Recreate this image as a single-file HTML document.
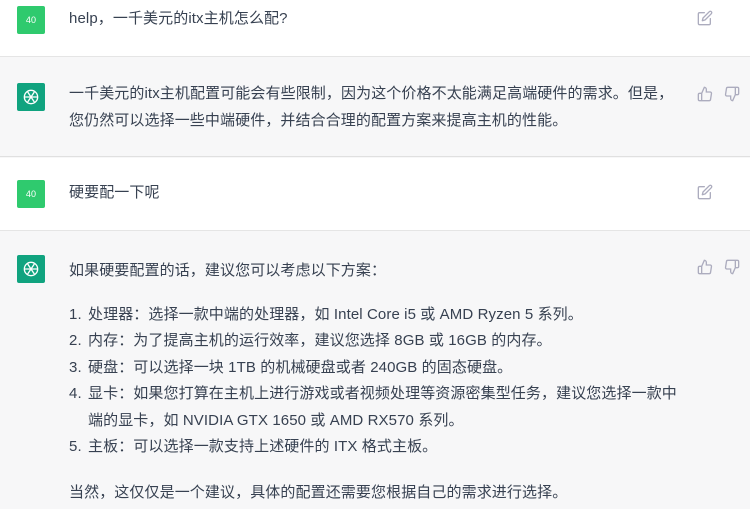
<!DOCTYPE html><html><head><meta charset="utf-8"><style>
*{margin:0;padding:0;box-sizing:border-box}
body{width:750px;height:509px;overflow:hidden;font-family:"Liberation Sans","Noto Sans CJK SC",sans-serif;color:#374151;font-size:15px;background:#f7f7f8;letter-spacing:0.1px}
.row{position:absolute;left:0;width:750px}
.w{background:#fff}.g{background:#f7f7f8}
.av{position:absolute;left:17px;width:28px;height:28px;border-radius:2px;color:#fff;font-size:9px;display:flex;align-items:center;justify-content:center}
.u{background:#2fca6e}.b{background:#10a37f}
.t{position:absolute;left:69px;line-height:27px;white-space:nowrap}
.li{position:relative;padding-left:19px;line-height:26.4px}
.li b{position:absolute;left:0;font-weight:normal}
.ic{position:absolute}
</style></head><body>
<div class="row w" style="top:0;height:57px;border-bottom:1px solid #e5e5e5">
<div class="av u" style="top:6px">40</div>
<div class="t" style="top:5px">help，一千美元的itx主机怎么配?</div>
<svg class="ic" style="left:697px;top:10px" width="16" height="16" viewBox="0 0 24 24" fill="none" stroke="#acacbe" stroke-width="2" stroke-linecap="round" stroke-linejoin="round"><path d="M11 4H4a2 2 0 0 0-2 2v14a2 2 0 0 0 2 2h14a2 2 0 0 0 2-2v-7"/><path d="M18.5 2.5a2.1 2.1 0 0 1 3 3L12 15l-4 1 1-4 9.5-9.5z"/></svg>
</div>
<div class="row g" style="top:58px;height:99px;border-bottom:1px solid #e0e0e0">
<div class="av b" style="top:25px"><svg width="20" height="20" viewBox="0 0 24 24" fill="none" stroke="#fff" stroke-width="1.6"><circle cx="12" cy="12" r="8"/><path d="M8 6l8 12M16 6L8 18M4 12h16"/></svg></div>
<div class="t" style="top:22px">一千美元的itx主机配置可能会有些限制，因为这个价格不太能满足高端硬件的需求。但是，<br>您仍然可以选择一些中端硬件，并结合合理的配置方案来提高主机的性能。</div>
<svg class="ic" style="left:697px;top:28px" width="16" height="16" viewBox="0 0 24 24" fill="none" stroke="#acacbe" stroke-width="2"><path d="M14 9V5a3 3 0 0 0-3-3l-4 9v11h11.3a2 2 0 0 0 2-1.7l1.4-9a2 2 0 0 0-2-2.3zM7 22H4a2 2 0 0 1-2-2v-7a2 2 0 0 1 2-2h3"/></svg>
<svg class="ic" style="left:724px;top:28px" width="16" height="16" viewBox="0 0 24 24" fill="none" stroke="#acacbe" stroke-width="2"><path d="M10 15v4a3 3 0 0 0 3 3l4-9V2H5.7a2 2 0 0 0-2 1.7l-1.4 9a2 2 0 0 0 2 2.3zM17 2h3a2 2 0 0 1 2 2v7a2 2 0 0 1-2 2h-3"/></svg>
</div>
<div class="row w" style="top:158px;height:73px;border-bottom:1px solid #e5e5e5">
<div class="av u" style="top:22px">40</div>
<div class="t" style="top:21px">硬要配一下呢</div>
<svg class="ic" style="left:697px;top:26px" width="16" height="16" viewBox="0 0 24 24" fill="none" stroke="#acacbe" stroke-width="2" stroke-linecap="round" stroke-linejoin="round"><path d="M11 4H4a2 2 0 0 0-2 2v14a2 2 0 0 0 2 2h14a2 2 0 0 0 2-2v-7"/><path d="M18.5 2.5a2.1 2.1 0 0 1 3 3L12 15l-4 1 1-4 9.5-9.5z"/></svg>
</div>
<div class="row g" style="top:232px;height:277px">
<div class="av b" style="top:23px"><svg width="20" height="20" viewBox="0 0 24 24" fill="none" stroke="#fff" stroke-width="1.6"><circle cx="12" cy="12" r="8"/><path d="M8 6l8 12M16 6L8 18M4 12h16"/></svg></div>
<div class="t" style="top:25px">如果硬要配置的话，建议您可以考虑以下方案：</div>
<div class="t" style="top:70px">
<div class="li"><b>1.</b>处理器：选择一款中端的处理器，如 Intel Core i5 或 AMD Ryzen 5 系列。</div>
<div class="li"><b>2.</b>内存：为了提高主机的运行效率，建议您选择 8GB 或 16GB 的内存。</div>
<div class="li"><b>3.</b>硬盘：可以选择一块 1TB 的机械硬盘或者 240GB 的固态硬盘。</div>
<div class="li"><b>4.</b>显卡：如果您打算在主机上进行游戏或者视频处理等资源密集型任务，建议您选择一款中<br>端的显卡，如 NVIDIA GTX 1650 或 AMD RX570 系列。</div>
<div class="li"><b>5.</b>主板：可以选择一款支持上述硬件的 ITX 格式主板。</div>
</div>
<div class="t" style="top:247px">当然，这仅仅是一个建议，具体的配置还需要您根据自己的需求进行选择。</div>
<svg class="ic" style="left:697px;top:27px" width="16" height="16" viewBox="0 0 24 24" fill="none" stroke="#acacbe" stroke-width="2"><path d="M14 9V5a3 3 0 0 0-3-3l-4 9v11h11.3a2 2 0 0 0 2-1.7l1.4-9a2 2 0 0 0-2-2.3zM7 22H4a2 2 0 0 1-2-2v-7a2 2 0 0 1 2-2h3"/></svg>
<svg class="ic" style="left:724px;top:27px" width="16" height="16" viewBox="0 0 24 24" fill="none" stroke="#acacbe" stroke-width="2"><path d="M10 15v4a3 3 0 0 0 3 3l4-9V2H5.7a2 2 0 0 0-2 1.7l-1.4 9a2 2 0 0 0 2 2.3zM17 2h3a2 2 0 0 1 2 2v7a2 2 0 0 1-2 2h-3"/></svg>
</div>
</body></html>
